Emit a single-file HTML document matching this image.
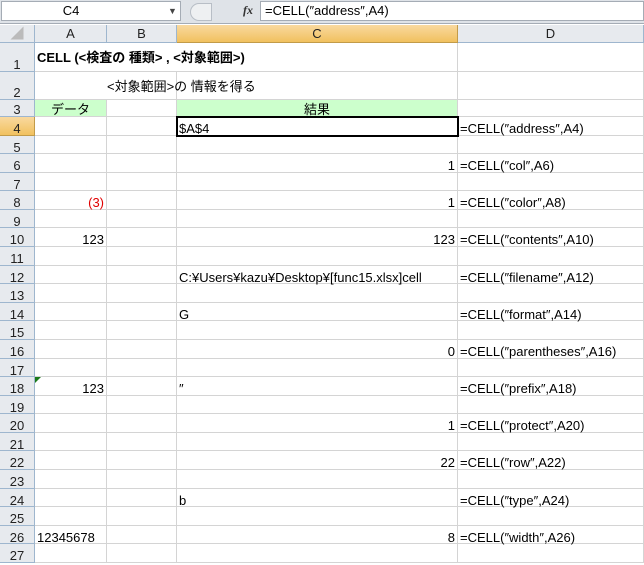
<!DOCTYPE html>
<html><head><meta charset="utf-8"><style>
*{margin:0;padding:0;box-sizing:border-box}
body{width:644px;height:565px;overflow:hidden;background:#fff;font-family:"Liberation Sans","Noto Sans CJK JP",sans-serif;font-size:13px;color:#000;position:relative}
#fb{position:absolute;left:0;top:0;width:644px;height:24px;background:#dfe3e8;border-bottom:1px solid #a5acb5}
#nb{position:absolute;left:1px;top:1px;width:180px;height:20px;background:#fff;border:1px solid #a5acb5;text-align:center;line-height:18px;padding-right:40px}
#fx{position:absolute;left:236px;top:1px;width:24px;height:20px;font-family:"Liberation Serif",serif;font-style:italic;font-weight:bold;line-height:18px;text-align:center;font-size:12px;color:#333}
#ft{position:absolute;left:260px;top:1px;width:384px;height:20px;background:#fff;border:1px solid #a5acb5;line-height:18px;padding-left:4px}
#grid{position:absolute;left:0;top:25px;display:grid;grid-template-columns:35px 72px 70px 281px 186px;grid-template-rows:18px 29px 28px 17px repeat(24,18.58px)}
#grid div{border-right:1px solid #d4d4d4;border-bottom:1px solid #d4d4d4;white-space:nowrap;overflow:visible;line-height:15px;padding:4px 2px 0}
#grid .h{background:#e7eaee;border-color:#9eb6ce;text-align:center;color:#222;line-height:18px;padding-top:0}
#grid .rh{background:#e7eaee;border-color:#9eb6ce;text-align:center;color:#222}
#grid .sel{background:linear-gradient(#f9d99f,#f1c15f);border-color:#c29b49}
.r{text-align:right}.c{text-align:center}
.g{background:#ccffcc}
</style></head><body>
<div id="fb"><div id="nb">C4</div><div style="position:absolute;left:168px;top:6px;font-size:9px;color:#444">▼</div><div style="position:absolute;left:190px;top:3px;width:22px;height:18px;border-radius:9px 0 0 9px;border:1px solid #b8bec6;background:#eef0f2"></div><div id="fx">fx</div><div id="ft">=CELL(″address″,A4)</div></div>
<div id="grid">
<div class="h" style="color:#bbb">◢</div><div class="h">A</div><div class="h">B</div><div class="h sel">C</div><div class="h">D</div>
<div class="rh" style="padding-top:14px">1</div><div style="font-weight:bold;padding-top:7px;border-right:none">CELL (&lt;検査の 種類&gt; , &lt;対象範囲&gt;)</div><div style="border-right:none"></div><div></div><div></div>
<div class="rh" style="padding-top:13px">2</div><div style="border-right:none;overflow:visible;padding-top:7px"><span style="position:relative;left:70px">&lt;対象範囲&gt;の 情報を得る</span></div><div></div><div></div><div></div>
<div class="rh" style="padding-top:2px">3</div><div class="g c" style="padding-top:2px">データ</div><div></div><div class="g c" style="padding-top:2px">結果</div><div></div>
<div class="rh sel">4</div><div></div><div></div><div style="outline:2px solid #000;outline-offset:-1px;position:relative;z-index:1">$A$4</div><div>=CELL(″address″,A4)</div>
<div class="rh">5</div><div></div><div></div><div></div><div></div>
<div class="rh">6</div><div></div><div></div><div class="r">1</div><div>=CELL(″col″,A6)</div>
<div class="rh">7</div><div></div><div></div><div></div><div></div>
<div class="rh">8</div><div class="r" style="color:#e00000">(3)</div><div></div><div class="r">1</div><div>=CELL(″color″,A8)</div>
<div class="rh">9</div><div></div><div></div><div></div><div></div>
<div class="rh">10</div><div class="r">123</div><div></div><div class="r">123</div><div>=CELL(″contents″,A10)</div>
<div class="rh">11</div><div></div><div></div><div></div><div></div>
<div class="rh">12</div><div></div><div></div><div>C:¥Users¥kazu¥Desktop¥[func15.xlsx]cell</div><div>=CELL(″filename″,A12)</div>
<div class="rh">13</div><div></div><div></div><div></div><div></div>
<div class="rh">14</div><div></div><div></div><div>G</div><div>=CELL(″format″,A14)</div>
<div class="rh">15</div><div></div><div></div><div></div><div></div>
<div class="rh">16</div><div></div><div></div><div class="r">0</div><div>=CELL(″parentheses″,A16)</div>
<div class="rh">17</div><div></div><div></div><div></div><div></div>
<div class="rh">18</div><div class="r" style="position:relative"><span style="position:absolute;left:0;top:0;width:0;height:0;border-top:6px solid #1a7a1a;border-right:6px solid transparent"></span>123</div><div></div><div>″</div><div>=CELL(″prefix″,A18)</div>
<div class="rh">19</div><div></div><div></div><div></div><div></div>
<div class="rh">20</div><div></div><div></div><div class="r">1</div><div>=CELL(″protect″,A20)</div>
<div class="rh">21</div><div></div><div></div><div></div><div></div>
<div class="rh">22</div><div></div><div></div><div class="r">22</div><div>=CELL(″row″,A22)</div>
<div class="rh">23</div><div></div><div></div><div></div><div></div>
<div class="rh">24</div><div></div><div></div><div>b</div><div>=CELL(″type″,A24)</div>
<div class="rh">25</div><div></div><div></div><div></div><div></div>
<div class="rh">26</div><div>12345678</div><div></div><div class="r">8</div><div>=CELL(″width″,A26)</div>
<div class="rh">27</div><div></div><div></div><div></div><div></div>
</div>
</body></html>
